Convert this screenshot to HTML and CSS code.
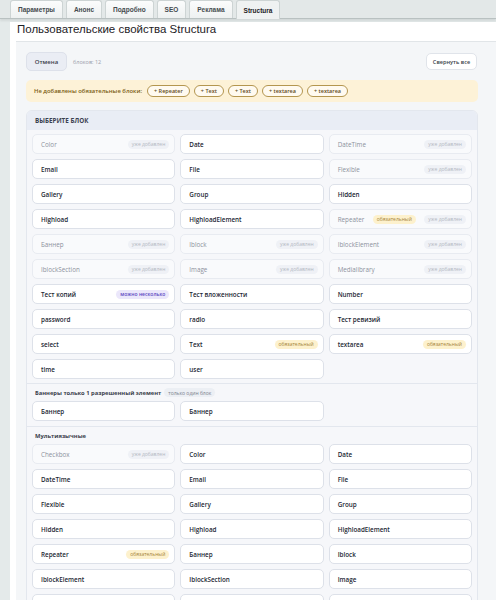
FILE: index.html
```html
<!DOCTYPE html>
<html lang="ru">
<head>
<meta charset="utf-8">
<title>Structura</title>
<link rel="stylesheet" href="styles.css">
</head>
<body>
<div class="tabbar">
  <div class="tab">Параметры</div>
  <div class="tab">Анонс</div>
  <div class="tab">Подробно</div>
  <div class="tab">SEO</div>
  <div class="tab">Реклама</div>
  <div class="tab tab-active">Structura</div>
</div>
<div class="page">
  <div class="sheet">
    <h1 class="title">Пользовательские свойства Structura</h1>
    <div class="panel">
      <div class="toolbar">
        <button class="btn btn-cancel">Отмена</button>
        <span class="count">блоков: 12</span>
        <button class="btn btn-collapse">Свернуть все</button>
      </div>
      <div class="notice">
        <span class="notice-text">Не добавлены обязательные блоки:</span>
        <span class="pill">+ Repeater</span>
        <span class="pill">+ Text</span>
        <span class="pill">+ Text</span>
        <span class="pill">+ textarea</span>
        <span class="pill">+ textarea</span>
      </div>
      <div class="card">
        <div class="card-head">Выберите блок</div>
        <div class="grid">
          <div class="item off"><span>Color</span><span class="badge b-added">уже добавлен</span></div>
          <div class="item"><span>Date</span></div>
          <div class="item off"><span>DateTime</span><span class="badge b-added">уже добавлен</span></div>
          <div class="item"><span>Email</span></div>
          <div class="item"><span>File</span></div>
          <div class="item off"><span>Flexible</span><span class="badge b-added">уже добавлен</span></div>
          <div class="item"><span>Gallery</span></div>
          <div class="item"><span>Group</span></div>
          <div class="item"><span>Hidden</span></div>
          <div class="item"><span>Highload</span></div>
          <div class="item"><span>HighloadElement</span></div>
          <div class="item off"><span>Repeater</span><span class="badge b-req">обязательный</span><span class="badge b-added">уже добавлен</span></div>
          <div class="item off"><span>Баннер</span><span class="badge b-added">уже добавлен</span></div>
          <div class="item off"><span>Iblock</span><span class="badge b-added">уже добавлен</span></div>
          <div class="item off"><span>IblockElement</span><span class="badge b-added">уже добавлен</span></div>
          <div class="item off"><span>IblockSection</span><span class="badge b-added">уже добавлен</span></div>
          <div class="item off"><span>Image</span><span class="badge b-added">уже добавлен</span></div>
          <div class="item off"><span>Medialibrary</span><span class="badge b-added">уже добавлен</span></div>
          <div class="item"><span>Тест копий</span><span class="badge b-multi">можно несколько</span></div>
          <div class="item"><span>Тест вложенности</span></div>
          <div class="item"><span>Number</span></div>
          <div class="item"><span>password</span></div>
          <div class="item"><span>radio</span></div>
          <div class="item"><span>Тест ревизий</span></div>
          <div class="item"><span>select</span></div>
          <div class="item"><span>Text</span><span class="badge b-req">обязательный</span></div>
          <div class="item"><span>textarea</span><span class="badge b-req">обязательный</span></div>
          <div class="item"><span>time</span></div>
          <div class="item"><span>user</span></div>
        </div>
        <div class="group">
          <div class="group-head">Баннеры только 1 разрешенный элемент <span class="badge b-one">только один блок</span></div>
          <div class="grid">
            <div class="item"><span>Баннер</span></div>
            <div class="item"><span>Баннер</span></div>
          </div>
        </div>
        <div class="group">
          <div class="group-head">Мультиязычные</div>
          <div class="grid">
            <div class="item off"><span>Checkbox</span><span class="badge b-added">уже добавлен</span></div>
            <div class="item"><span>Color</span></div>
            <div class="item"><span>Date</span></div>
            <div class="item"><span>DateTime</span></div>
            <div class="item"><span>Email</span></div>
            <div class="item"><span>File</span></div>
            <div class="item"><span>Flexible</span></div>
            <div class="item"><span>Gallery</span></div>
            <div class="item"><span>Group</span></div>
            <div class="item"><span>Hidden</span></div>
            <div class="item"><span>Highload</span></div>
            <div class="item"><span>HighloadElement</span></div>
            <div class="item"><span>Repeater</span><span class="badge b-req">обязательный</span></div>
            <div class="item"><span>Баннер</span></div>
            <div class="item"><span>Iblock</span></div>
            <div class="item"><span>IblockElement</span></div>
            <div class="item"><span>IblockSection</span></div>
            <div class="item"><span>Image</span></div>
            <div class="item"><span>Medialibrary</span></div>
            <div class="item"><span>Number</span></div>
            <div class="item"><span>Text</span></div>
          </div>
        </div>
      </div>
    </div>
  </div>
</div>
</body>
</html>
```

FILE: styles.css
```css
html, body {
  margin: 0;
  padding: 0;
}

body {
  width: 496px;
  height: 600px;
  overflow: hidden;
  background: #e4eaea;
  font-family: "Open Sans", "Liberation Sans", sans-serif;
  color: #2b2f38;
}

/* top tab strip */
.tabbar {
  display: flex;
  gap: 3px;
  height: 18px;
  padding-left: 10px;
  background: #e3e8e8;
  border-bottom: 1px solid #b9c1c1;
  box-shadow: 0 2px 2px rgba(0, 0, 0, 0.08);
}

.tab {
  display: flex;
  align-items: center;
  padding: 0 7px;
  height: 17px;
  border: 1px solid #cdd4d4;
  border-bottom: none;
  border-radius: 3px 3px 0 0;
  background: linear-gradient(#fbfcfc, #eef1f1);
  font-family: "Liberation Sans", sans-serif;
  font-size: 6.5px;
  font-weight: bold;
  color: #454b4f;
}

.tab-active {
  background: #eff2f2;
  color: #1d2124;
  height: 18px;
}

/* page frame */
.page {
  padding: 3px 0 0 10px;
}

.sheet {
  background: #fff;
  padding: 0 0 0 6px;
}

.title {
  margin: 0;
  height: 19px;
  padding-left: 1px;
  font-family: "Liberation Sans", sans-serif;
  font-size: 11.5px;
  font-weight: normal;
  line-height: 15px;
  color: #1e2226;
  border-bottom: 1px solid #e1e5e8;
}

.panel {
  background: #f4f6f8;
  padding: 10px 18px 0 10px;
  height: 560px;
}

/* toolbar */
.toolbar {
  display: flex;
  align-items: center;
  height: 19px;
}

.btn {
  font-family: "Open Sans", sans-serif;
  font-weight: 600;
  font-size: 6px;
  color: #3a3f4a;
  border-radius: 5px;
  white-space: nowrap;
  padding: 0;
  cursor: pointer;
}

.btn-cancel {
  width: 41px;
  height: 19px;
  background: #eaedf4;
  border: 1px solid #dde1ea;
}

.count {
  margin-left: 6px;
  font-size: 5.5px;
  color: #9aa0ab;
}

.btn-collapse {
  margin-left: auto;
  width: 51px;
  height: 17px;
  background: #fff;
  border: 1px solid #e0e4ea;
  margin-right: 1px;
  font-size: 5.6px;
}

/* required-blocks notice */
.notice {
  display: flex;
  align-items: center;
  gap: 4px;
  height: 22px;
  margin-top: 9px;
  padding: 0 8px;
  background: #fdf2d7;
  border-radius: 5px;
}

.notice-text {
  font-size: 5.9px;
  font-weight: 600;
  color: #7b5d14;
  margin-right: 1px;
}

.pill {
  display: inline-flex;
  align-items: center;
  height: 12px;
  box-sizing: border-box;
  padding: 0 6px;
  border: 1px solid #b4964f;
  border-radius: 7px;
  background: #fffaf0;
  font-size: 5.5px;
  font-weight: 600;
  color: #5f4a1c;
}

/* block picker card */
.card {
  margin-top: 8px;
  background: #f6f7fa;
  border: 1px solid #e3e7ee;
  border-radius: 6px;
  overflow: hidden;
}

.card-head {
  height: 19px;
  display: flex;
  align-items: center;
  padding-left: 8px;
  background: #e9edf5;
  text-transform: uppercase;
  font-size: 6.3px;
  font-weight: 700;
  color: #3b4150;
}

.grid {
  display: grid;
  grid-template-columns: repeat(3, 1fr);
  gap: 5px;
  padding: 4px 5px 4px;
}

.item {
  display: flex;
  align-items: center;
  gap: 4px;
  height: 20px;
  box-sizing: border-box;
  padding: 0 5px 0 8px;
  background: #fff;
  border: 1px solid #dde1e9;
  border-radius: 5px;
  font-size: 6.3px;
  font-weight: 600;
  color: #232834;
}

.item > span:first-child {
  margin-right: auto;
}

.item.off {
  background: #f9fafc;
  border-color: #e8ebf1;
  color: #8d929c;
  font-weight: 400;
}

.badge {
  display: inline-flex;
  align-items: center;
  height: 9px;
  padding: 0 4px;
  border-radius: 5px;
  font-size: 5px;
  font-weight: 400;
}

.b-added {
  background: #eff1f6;
  color: #b3b8c2;
}

.b-req {
  background: #fdf1cd;
  color: #a5843a;
}

.item.off .b-req {
  margin-right: auto;
}

.b-multi {
  background: #ebe7fb;
  color: #5b48c2;
  font-weight: 600;
}

.b-one {
  background: #eceff4;
  color: #7b818d;
  margin-left: 3px;
}

.group {
  border-top: 1px solid #e3e7ee;
}

.group-head {
  display: flex;
  align-items: center;
  height: 17px;
  padding: 0 8px;
  font-size: 5.8px;
  font-weight: 700;
  color: #3a404c;
}

.group .grid {
  padding-top: 0;
  padding-bottom: 5px;
}
```
